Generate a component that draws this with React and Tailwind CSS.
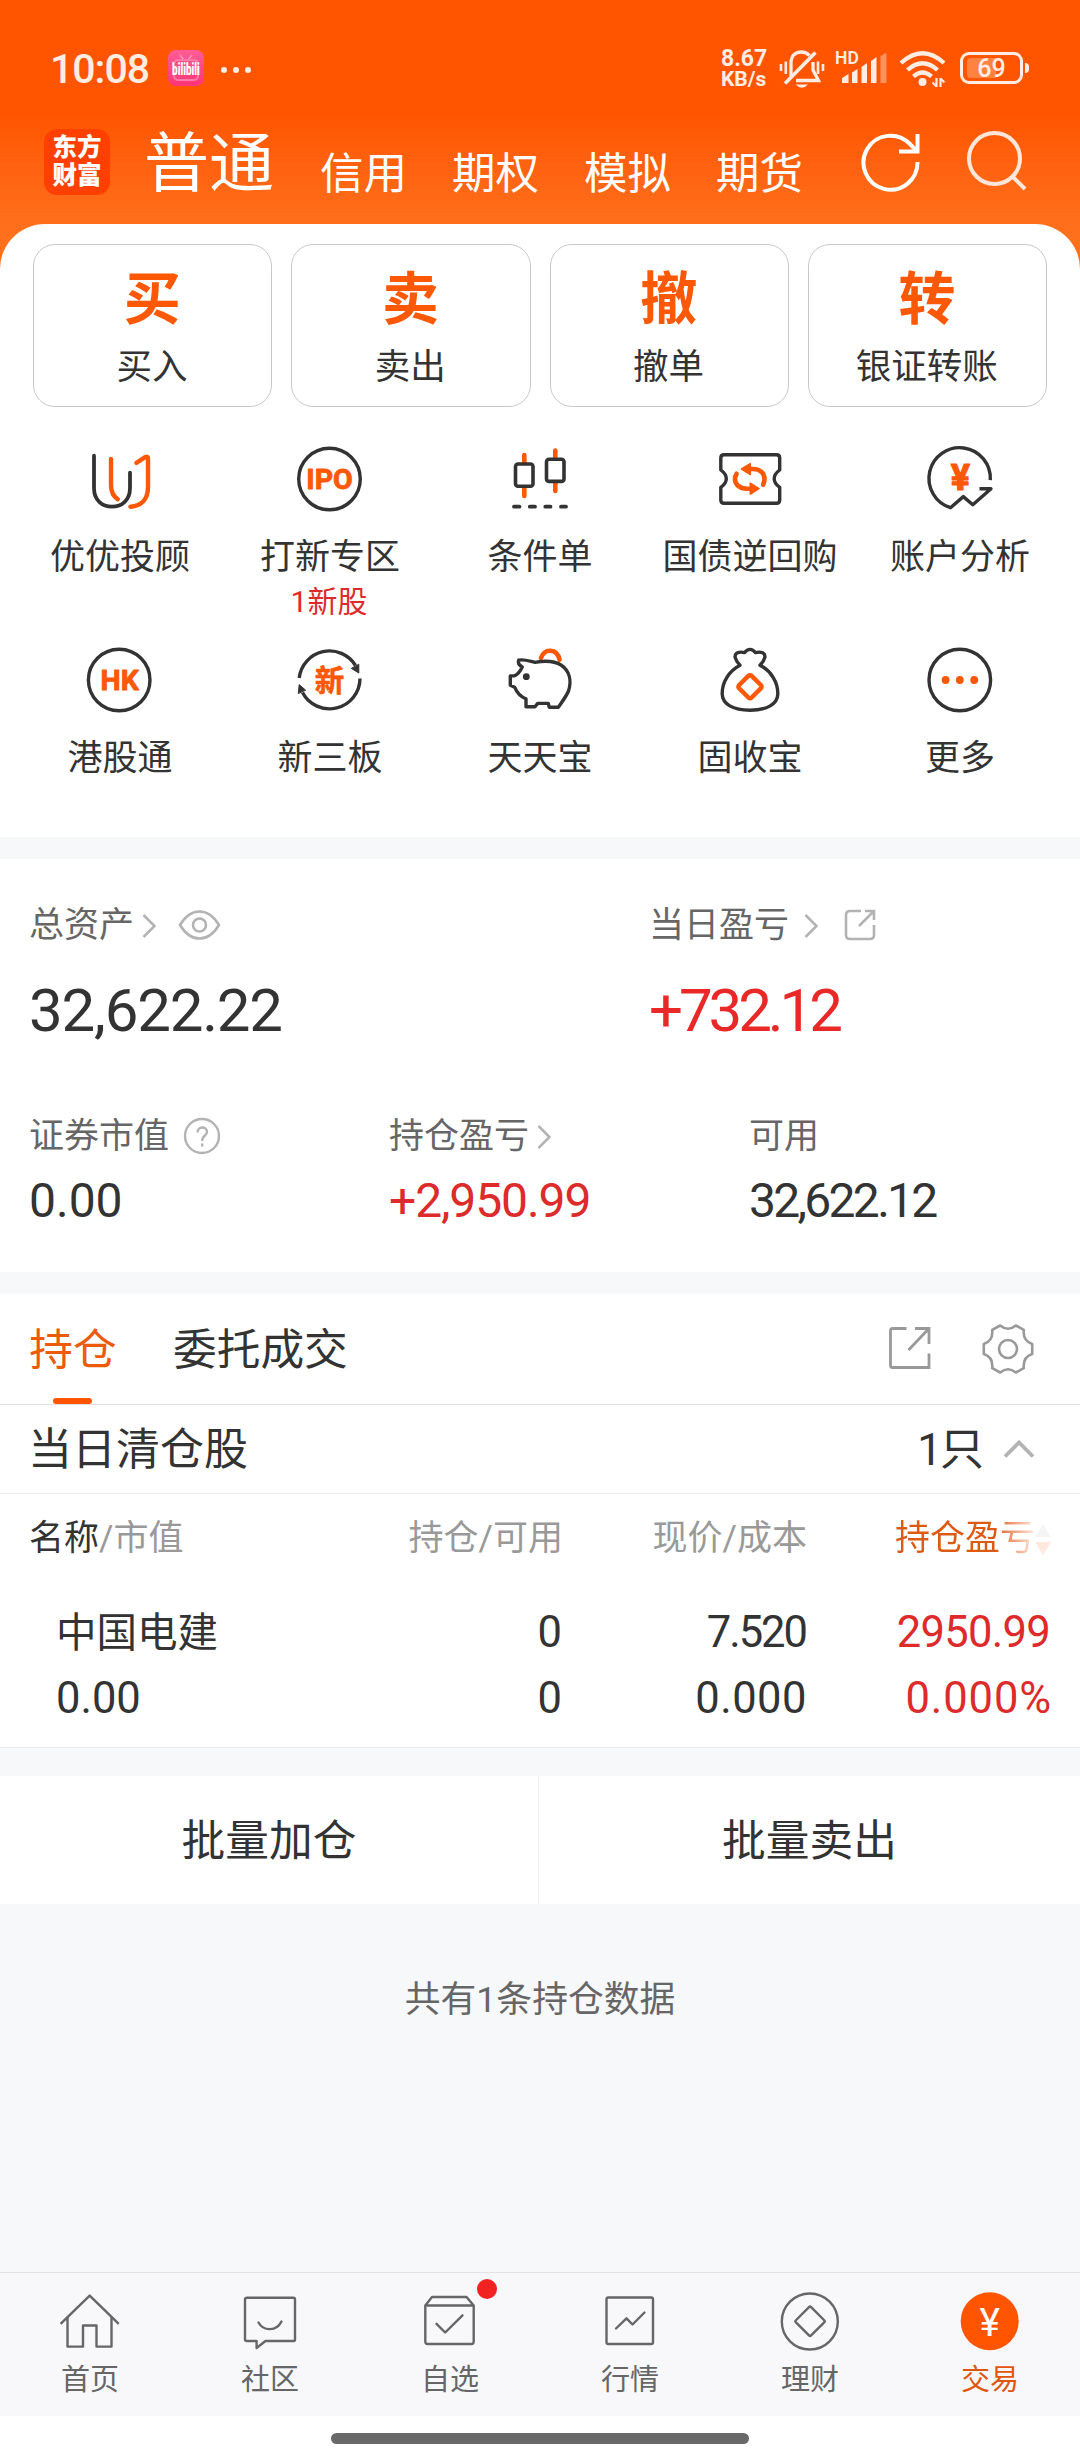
const DARK = '#333333';
const ORANGE = '#fc5805';

function GridIcon({ children }) {
  return (
    <svg width="72" height="72" viewBox="0 0 72 72" fill="none" stroke={DARK} strokeWidth="3.4" strokeLinecap="round" strokeLinejoin="round">
      {children}
    </svg>
  );
}

const iconText = { textAnchor: 'middle', fill: ORANGE, fontFamily: 'Roboto, "Noto Sans CJK SC", sans-serif', fontWeight: 700 };

const icons = {
  adviser: (
    <GridIcon>
      <path strokeWidth="3.8" d="M10 12.7V45C10 57 18 63.7 28 63.7S46 57 46 45V29.7" />
      <g stroke={ORANGE} strokeWidth="4.4">
        <path d="M27 16V42C27 49 29.5 53.5 33.8 56.3" />
        <path d="M52.4 19.9L61.5 13.9Q64 12.8 64 15.5V44C64 56 58 63 46.4 63.7" />
      </g>
    </GridIcon>
  ),
  ipo: (
    <GridIcon>
      <circle cx="35.5" cy="36" r="30.8" />
      <text x="35.5" y="46.3" fontSize="28.5" stroke={ORANGE} strokeWidth="0.9" {...iconText}>IPO</text>
    </GridIcon>
  ),
  condition: (
    <GridIcon>
      <g stroke={ORANGE} strokeWidth="4.6">
        <path d="M20.3 12V20M20.3 44V53M51.3 7.5V15M51.3 40V48" />
      </g>
      <rect x="11.5" y="21" width="17.5" height="22.2" rx="2.5" strokeWidth="3.6" />
      <rect x="42.5" y="16.2" width="17.5" height="22.2" rx="2.5" strokeWidth="3.6" />
      <path strokeWidth="3.8" d="M10 63.7H15.5M25.8 63.7H31M41.3 63.7H46.5M57 63.7H62" />
    </GridIcon>
  ),
  repo: (
    <GridIcon>
      <path d="M10 11.7H62.5Q65.7 11.7 65.7 15V27Q60.2 31 60.2 35.7T65.7 44.3V57Q65.7 60.3 62.5 60.3H10Q6.8 60.3 6.8 57V44.3Q12.3 40.4 12.3 35.7T6.8 27V15Q6.8 11.7 10 11.7Z" />
      <g stroke={ORANGE} strokeWidth="4.6">
        <path d="M36 26H39C47 26 50.5 31 50.5 36Q50.5 39 49.2 41.6" />
        <path d="M36 45.7H33C25 45.7 21 41 21 36Q21 33 22.6 30.8" />
        <path fill={ORANGE} strokeWidth="1.5" d="M27.5 26L36.3 20.6V31.6ZM45 45.7L36.3 40.2V51.2Z" />
      </g>
    </GridIcon>
  ),
  analysis: (
    <GridIcon>
      <path strokeLinecap="butt" d="M66.3 37.2A30.7 30.7 0 1 0 26.5 64.7L39.3 53.6L48.8 61.7L67 45.8H55.5" />
      <text x="36.4" y="46.8" fontSize="36" stroke={ORANGE} strokeWidth="1.2" {...iconText}>¥</text>
    </GridIcon>
  ),
  hk: (
    <GridIcon>
      <circle cx="35.2" cy="36" r="30.8" />
      <text x="35.7" y="46.3" fontSize="28.5" stroke={ORANGE} strokeWidth="0.9" {...iconText}>HK</text>
    </GridIcon>
  ),
  newBoard: (
    <GridIcon>
      <g strokeLinecap="butt">
        <path d="M5.2 34A30.5 30.5 0 0 1 61.5 21.5" />
        <path d="M66 34.5A30.5 30.5 0 0 1 8.5 48.5" />
      </g>
      <path fill={DARK} strokeWidth="1" d="M64.8 20.6V29L57.6 24.6ZM4.3 49.2L5.2 40.6L11.4 46Z" />
      <text x="35.5" y="46.6" fontSize="29.5" stroke={ORANGE} strokeWidth="0.6" {...iconText}>新</text>
    </GridIcon>
  ),
  piggy: (
    <GridIcon>
      <path stroke={ORANGE} strokeWidth="4.6" d="M36.9 14C39 8.5 43 6.6 46.4 6.8C51.5 7 54.5 10.5 55.6 15.8" />
      <path d="M31 18.3C25 17 20 15 14.6 16.2C13.6 19 15.5 21.3 18.3 22.9C16.5 27 13.6 30.5 10.3 31.9H6.3V41.3L10.6 43.2C13 49 17 53 22 54.8V62.8H31L33.7 59.4H44.3L45.2 63.2H54.3C58 58 62.5 52 64.5 47C68 36 65 26.5 57 21C50 16.5 40 16.6 31 18.3Z" />
      <circle cx="22.3" cy="32.7" r="3.4" fill={DARK} stroke="none" />
    </GridIcon>
  ),
  bag: (
    <GridIcon>
      <path d="M26 21.2C21 16 19.5 11 23 9Q26 7.4 30.5 8.6Q33 5.4 36 5.4T41.5 8.6Q46 7.4 49 9C52.5 11 51 16 46 21.2C57 27 64 38 63.8 50C63.6 60 53 66.2 36 66.2S8.4 60 8.2 50C8 38 15 27 26 21.2Z" />
      <rect x="27.2" y="33.9" width="17.6" height="17.6" rx="2" stroke={ORANGE} strokeWidth="4.4" transform="rotate(45 36 42.7)" />
    </GridIcon>
  ),
  more: (
    <GridIcon>
      <circle cx="35.8" cy="36" r="30.8" />
      <g fill={ORANGE} stroke="none">
        <circle cx="21.6" cy="36" r="3.9" />
        <circle cx="35.8" cy="36" r="3.9" />
        <circle cx="50.2" cy="36" r="3.9" />
      </g>
    </GridIcon>
  ),
};

function TabIcon({ children }) {
  return (
    <svg width="64" height="64" viewBox="0 0 64 64" fill="none" stroke="#666666" strokeWidth="2.4" strokeLinejoin="round" strokeLinecap="round">
      {children}
    </svg>
  );
}

const tabs = [
  {
    label: '首页',
    icon: (
      <TabIcon>
        <path strokeLinecap="butt" d="M2.6 34.8L31.7 6.6L60.7 34.8" />
        <path d="M9.5 29V57.6H25V36.5H38.5V57.6H53.5V29" />
      </TabIcon>
    ),
  },
  {
    label: '社区',
    icon: (
      <TabIcon>
        <path d="M9 8.8H55.5Q57 8.8 57 10.5V50.5Q57 52 55.5 52H27.5L18.6 59V52H9Q7 52 7 50.5V10.5Q7 8.8 9 8.8Z" />
        <path d="M20.5 33.5C25.5 42.5 38.5 42.5 43.5 32.5" />
      </TabIcon>
    ),
  },
  {
    label: '自选',
    dot: true,
    icon: (
      <TabIcon>
        <path d="M7.3 16.5L14 8H48.5L55.7 16.5V52.5Q55.7 55 53.5 55H9.5Q7.3 55 7.3 52.5ZM7.3 16.5H55.7" />
        <path d="M18.5 34.8L27.2 43.5L44.5 26.3" />
      </TabIcon>
    ),
  },
  {
    label: '行情',
    icon: (
      <TabIcon>
        <rect x="8.5" y="8.5" width="46.5" height="46.5" rx="1.8" />
        <path d="M18 39.5L28.5 29.3L34.5 35.5L46.5 23.5" />
      </TabIcon>
    ),
  },
  {
    label: '理财',
    icon: (
      <TabIcon>
        <circle cx="31.8" cy="32.5" r="28" />
        <rect x="21.3" y="21.5" width="21.5" height="21.5" rx="1.5" transform="rotate(45 32 32.3)" />
      </TabIcon>
    ),
  },
  {
    label: '交易',
    active: true,
    icon: (
      <TabIcon>
        <circle cx="31.7" cy="32.2" r="29" fill="#ff5500" stroke="none" />
        <text x="31.7" y="46.5" fontSize="39" fontWeight="400" textAnchor="middle" fill="#fff" stroke="none" fontFamily="Roboto, sans-serif">¥</text>
      </TabIcon>
    ),
  },
];

function Chevron({ className }) {
  return (
    <svg className={className} width="14" height="24" viewBox="0 0 14 24" fill="none" stroke="#b3b3b3" strokeWidth="2.5">
      <path d="M1.5 1L12.5 12L1.5 23" />
    </svg>
  );
}

function StatusBar() {
  return (
    <div className="flex h-[100px] items-end px-[51px] text-[#ffede4]">
      <div className="mb-[10px] -ml-px w-[101px] text-[41px] leading-[42px] font-medium tracking-[-1px]">10:08</div>
      <div className="mb-[14px] ml-[17px] h-9 w-9 rounded-lg bg-linear-to-b from-[#ff5c96] to-[#ff3377]">
        <svg width="36" height="36" viewBox="0 0 36 36" fill="none">
          <path stroke="#ff8ab4" strokeWidth="2" d="M12 5l4 5M24 5l-4 5" />
          <rect x="6" y="10" width="24" height="20" rx="4" stroke="#ff7aa8" strokeWidth="2" />
          <text x="18" y="15.5" textAnchor="middle" fontSize="10" fontWeight="900" fill="#fff" transform="scale(1 1.6)">bilibili</text>
        </svg>
      </div>
      <div className="mb-[27px] ml-[17px] flex gap-[6px]">
        <i className="h-[6px] w-[6px] rounded-full bg-[#ffede4]" />
        <i className="h-[6px] w-[6px] rounded-full bg-[#ffede4]" />
        <i className="h-[6px] w-[6px] rounded-full bg-[#ffede4]" />
      </div>
      <div className="mb-[11px] ml-auto w-[50px] font-bold whitespace-nowrap">
        <div className="text-[23px] leading-[20px]">8.67</div>
        <div className="text-[21px] leading-[20px]">KB/s</div>
      </div>
      <svg className="mb-[11px] ml-2" width="46" height="40" viewBox="0 0 46 40" fill="none" stroke="#ffede4" strokeWidth="3.3">
        <path d="M12 27V14C12 6 17 3 22.5 3Q27 3 30.5 6.5M34 13V21L39.5 31.5H17" />
        <path strokeWidth="3.6" d="M6 34.5L36.5 3.5" />
        <path strokeWidth="2.6" d="M2 15V22M6.8 12.5V25M39 12.5V25M44 15V22" />
        <path fill="#ffede4" stroke="none" d="M16.5 35.5H29Q23 42 16.5 35.5Z" />
      </svg>
      <svg className="mb-[16px] ml-[8px]" width="54" height="35" viewBox="0 0 54 35" fill="#ffede4">
        <text x="2" y="15" fontSize="17.5" fontWeight="600">HD</text>
        <path d="M9 29L15.5 25V34H9ZM19 23.5L24.5 20V34H19ZM28.5 18L34 14V34H28.5ZM38 12L43.5 8V34H38Z" />
        <path opacity=".4" d="M47.5 7L53.5 3.5V34H47.5Z" />
      </svg>
      <svg className="mb-[11px] ml-[12px]" width="48" height="40" viewBox="0 0 48 40" fill="none" stroke="#ffede4" strokeWidth="4.3">
        <path d="M2 14Q23.5-5.5 45 14M8.5 21Q23.5 7.5 38.5 21M14.5 27.5Q23.5 19.5 32.5 27.5" />
        <circle cx="23.5" cy="33" r="4" fill="#ffede4" stroke="none" />
        <path strokeWidth="2.2" d="M37.5 29V38M37.5 37.5L33.5 33.5M41.5 38V29M41.5 29.5L45.5 33.5" />
      </svg>
      <div className="mb-[16px] ml-[13px] flex h-[32px] w-[63px] items-center rounded-[9px] border-[3px] border-[#ffede4] px-1">
        <div className="flex h-[20px] w-[51px] items-center justify-center rounded-[4px] bg-linear-to-r from-[#ff8340] from-60% to-transparent to-60% text-[25px] leading-none font-medium">69</div>
      </div>
      <div className="mb-[27px] ml-[2px] h-[10px] w-1 rounded-r-sm bg-[#ffede4]" />
    </div>
  );
}

function Header() {
  return (
    <header className="h-[270px] bg-linear-to-b from-[#ff5500] from-[42%] to-[#ff701c] to-[85%]">
      <StatusBar />
      <div className="flex h-[124px] items-start pl-11 text-white">
        <div className="mt-[29px] flex h-[66px] w-[66px] flex-col items-center justify-center rounded-[13px] bg-[#ff4000] text-[24.5px] leading-[28px] font-black">
          <span>东方</span>
          <span>财富</span>
        </div>
        <nav className="ml-[34px] flex items-start whitespace-nowrap text-[43.5px] leading-[56px]">
          <span className="mt-[24px] w-[176px] text-[65px] leading-[80px]">普通</span>
          <span className="mt-[47px] w-[132px]">信用</span>
          <span className="mt-[47px] w-[132px]">期权</span>
          <span className="mt-[47px] w-[132px]">模拟</span>
          <span className="mt-[47px] w-[132px]">期货</span>
        </nav>
        <svg className="mt-[30px] ml-[13px]" width="60" height="64" viewBox="0 0 60 64" fill="none" stroke="#fff" strokeWidth="4">
          <path d="M56.5 32A27 27 0 1 1 49 14L55.5 21" />
          <path d="M56.5 4V21.5H38" />
        </svg>
        <svg className="mt-[28px] ml-[44px]" width="62" height="64" viewBox="0 0 62 64" fill="none" stroke="#ffe6d8" strokeWidth="4">
          <circle cx="29.5" cy="30.5" r="25.5" />
          <path d="M47 48L60 61" />
        </svg>
      </div>
    </header>
  );
}

const actions = [
  ['买', '买入'],
  ['卖', '卖出'],
  ['撤', '撤单'],
  ['转', '银证转账'],
];

const services = [
  ['adviser', '优优投顾'],
  ['ipo', '打新专区', '1新股'],
  ['condition', '条件单'],
  ['repo', '国债逆回购'],
  ['analysis', '账户分析'],
  ['hk', '港股通'],
  ['newBoard', '新三板'],
  ['piggy', '天天宝'],
  ['bag', '固收宝'],
  ['more', '更多'],
];

function Services() {
  return (
    <section className="-mt-[46px] h-[613px] rounded-t-[45px] bg-white pt-[20px]">
      <div className="grid grid-cols-4 gap-[19px] px-[33px]">
        {actions.map(([glyph, label]) => (
          <div key={label} className="flex h-[163px] flex-col items-center rounded-[22px] border border-[#c9c9c9]">
            <div className="mt-[26px] mr-px text-[57px] leading-[58px] font-bold text-[#fc5805]">{glyph}</div>
            <div className="mt-[18px] mr-px text-[35.5px] leading-[40px]">{label}</div>
          </div>
        ))}
      </div>
      <div className="mt-[36px] grid grid-cols-5 px-[15px]">
        {services.map(([icon, label, note]) => (
          <div key={label} className="flex h-[201px] flex-col items-center">
            {icons[icon]}
            <div className="mt-[23px] text-[35px] leading-[40px] whitespace-nowrap">{label}</div>
            {note && <div className="mt-[8px] mr-[2px] text-[30px] leading-[32px] text-[#dd2b2b]">{note}</div>}
          </div>
        ))}
      </div>
    </section>
  );
}

function Assets() {
  return (
    <section className="mt-[22px] h-[413px] bg-white px-[29px] pt-[47px]">
      <div className="flex text-[35px] leading-[40px] text-[#666]">
        <div className="w-[620px]">
          <div className="flex items-center">
            总资产
            <Chevron className="-mt-px ml-[8px]" />
            <svg className="-mt-[3px] ml-[22px]" width="43" height="30" viewBox="0 0 43 30" fill="none" stroke="#b3b3b3" strokeWidth="2.6">
              <path d="M2 15C8 5 14 1.5 21.5 1.5S35 5 41 15C35 25 29 28.5 21.5 28.5S8 25 2 15Z" />
              <circle cx="21.5" cy="15" r="6.5" />
            </svg>
          </div>
          <div className="mt-[30px] text-[60px] leading-[70px] tracking-[-1.2px] text-[#333]">32,622.22</div>
        </div>
        <div>
          <div className="flex items-center">
            当日盈亏
            <Chevron className="-mt-px ml-[15px]" />
            <svg className="-mt-[2px] ml-[26px]" width="32" height="32" viewBox="0 0 32 32" fill="none" stroke="#b3b3b3" strokeWidth="2.6">
              <path d="M17 2H6Q2 2 2 6V26Q2 30 6 30H26Q30 30 30 26V16M21 2H30V11M30 2L15 17" />
            </svg>
          </div>
          <div className="mt-[30px] text-[60px] leading-[70px] tracking-[-4.1px] text-[#e92828]">+732.12</div>
        </div>
      </div>
      <div className="mt-[71px] flex text-[35px] leading-[40px] text-[#666]">
        <div className="w-[360px]">
          <div className="flex h-10 items-center">
            证券市值
            <svg className="-mt-[2px] ml-[14px]" width="38" height="38" viewBox="0 0 38 38" fill="none" stroke="#b3b3b3" strokeWidth="2.4">
              <circle cx="19" cy="19" r="17" />
              <path d="M14.500 15.500C14.500 9 24 9 24 15C24 19 19.200 18.500 19.200 23V24M19.200 26.500V29.500" />
            </svg>
          </div>
          <div className="mt-[18px] text-[48px] leading-[52px] text-[#333]">0.00</div>
        </div>
        <div className="w-[360px]">
          <div className="flex items-center">
            持仓盈亏
            <Chevron className="-mt-px ml-[8px]" />
          </div>
          <div className="mt-[18px] text-[48px] leading-[52px] tracking-[-1.100px] text-[#dd2b2b]">+2,950.99</div>
        </div>
        <div>
          <div>可用</div>
          <div className="mt-[18px] text-[48px] leading-[52px] tracking-[-2.700px] text-[#333]">32,622.12</div>
        </div>
      </div>
    </section>
  );
}

function Holdings() {
  return (
    <section className="mt-[22px] bg-white">
      <div className="flex h-[111px] border-b border-[#e0e0e0] pr-[46px] pl-[29px] text-[43.700px] leading-[48px]">
        <div className="flex w-[88px] flex-col items-center justify-between pt-[32px] text-[#ec5a0a]">
          持仓
          <i className="mr-[2px] h-[6px] w-[39px] rounded-full bg-[#ff5500]" />
        </div>
        <div className="ml-[56px] pt-[32px]">委托成交</div>
        <svg className="mt-[32px] ml-auto" width="44" height="44" viewBox="0 0 44 44" fill="none" stroke="#999" strokeWidth="2.800">
          <path d="M18.500 2.500H4.500Q2.500 2.500 2.500 4.500V39.500Q2.500 41.500 4.500 41.500H41V27.500M27 2.500H41V18M41 2.500L20.500 24" />
        </svg>
        <svg className="mt-[29px] ml-[50px]" width="52" height="52" viewBox="-26 -26 52 52" fill="none" stroke="#999" strokeWidth="2.600" strokeLinejoin="round">
          <path d="M-7.800-23.500Q0-17 7.800-23.500L15.800-19.200Q14.700-8 24.200-5V5Q14.700 8 15.800 19.200L7.800 23.500Q0 17-7.800 23.500L-15.800 19.200Q-14.700 8-24.200 5V-5Q-14.700-8-15.800-19.200Z" />
          <circle r="9" />
        </svg>
      </div>
      <div className="flex h-[89px] items-center border-b border-[#ececec] pr-[45px] pl-[28px] text-[44px]">
        <span className="pt-px">当日清仓股</span>
        <span className="ml-auto pt-px tracking-[-2px]">1只</span>
        <svg className="ml-[21px]" width="32" height="20" viewBox="0 0 32 20" fill="none" stroke="#b3b3b3" strokeWidth="3.800">
          <path d="M2 17.500L16 3.500L30 17.500" />
        </svg>
      </div>
      <div className="flex h-[87px] items-center pt-[4px] pl-[29px] text-[35px] whitespace-nowrap text-[#999]">
        <div className="w-[373px]"><span className="text-[#333]">名称</span>/市值</div>
        <div className="w-[161px] text-right">持仓/可用</div>
        <div className="w-[244px] text-right">现价/成本</div>
        <div className="ml-[88px] flex items-center">
          <span className="bg-linear-to-r from-[#dc5a12] from-72% to-[#fde9df] bg-clip-text text-transparent">持仓盈亏</span>
          <svg width="16" height="32" viewBox="0 0 16 32">
            <path fill="#f5f5f5" d="M8 0L16 13H0Z" />
            <path fill="#ffe8de" d="M0 18H16L8 31Z" />
          </svg>
        </div>
      </div>
      <div className="h-[167px] border-b border-[#ececec] pt-[19px] pl-[56px] text-[43.500px] leading-[66px]">
        <div className="flex">
          <div className="w-[345px] text-[40.500px]">中国电建</div>
          <div className="w-[161px] text-right">0</div>
          <div className="w-[244px] text-right tracking-[-2px]">7.520</div>
          <div className="w-[244px] text-right tracking-[-0.700px] text-[#dd2b2b]">2950.99</div>
        </div>
        <div className="flex">
          <div className="w-[345px]">0.00</div>
          <div className="w-[161px] text-right">0</div>
          <div className="w-[245px] text-right tracking-[0.500px]">0.000</div>
          <div className="w-[245px] text-right tracking-[0.900px] text-[#dd2b2b]">0.000%</div>
        </div>
      </div>
    </section>
  );
}

function TabBar() {
  return (
    <footer className="mt-auto">
      <div className="grid h-[144px] grid-cols-6 border-t border-[#e2e2e4] bg-[#f8f8fb] text-[29px] leading-[34px] text-[#666]">
        {tabs.map((tab) => (
          <div key={tab.label} className="relative flex flex-col items-center pt-[16px]">
            {tab.icon}
            {tab.dot && <i className="absolute top-[6px] right-[43px] h-5 w-5 rounded-full bg-[#f32222]" />}
            <span className={tab.active ? 'mt-[10px] text-[#e0560f]' : 'mt-[10px]'}>{tab.label}</span>
          </div>
        ))}
      </div>
      <div className="flex h-11 justify-center bg-white pt-[17px]">
        <div className="h-[11px] w-[418px] rounded-full bg-[#696969]" />
      </div>
    </footer>
  );
}

export default function App() {
  return (
    <div className="flex h-[2460px] w-[1080px] flex-col overflow-hidden bg-[#f7f8fa] font-[Roboto,'Noto_Sans_CJK_SC',sans-serif] text-[#333]">
      <Header />
      <Services />
      <Assets />
      <Holdings />
      <div className="mt-[28px] flex h-[128px] bg-white text-center text-[43.700px] leading-[130px]">
        <div className="w-[539px] border-r border-[#f3f3f3]">批量加仓</div>
        <div className="flex-1">批量卖出</div>
      </div>
      <div className="mt-[76px] text-center text-[35.800px] leading-[40px] text-[#666]">共有1条持仓数据</div>
      <TabBar />
    </div>
  );
}
